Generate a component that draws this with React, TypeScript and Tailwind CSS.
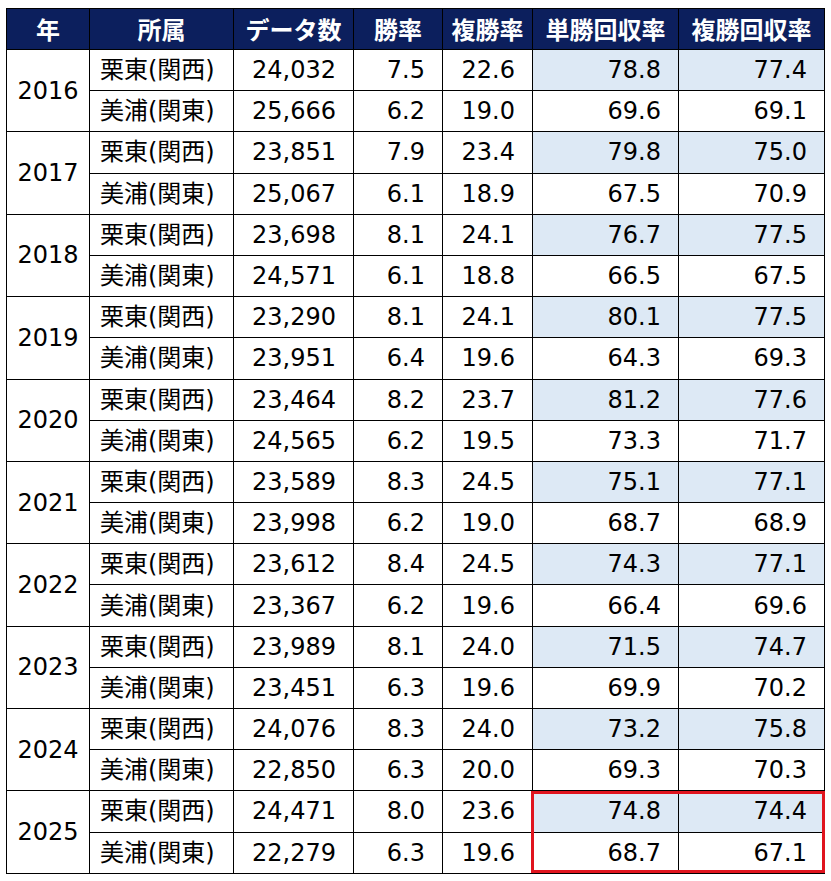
import { Fragment } from 'react';

const rows = [
  { year: '2016', k: ['24,032', '7.5', '22.6', '78.8', '77.4'], m: ['25,666', '6.2', '19.0', '69.6', '69.1'] },
  { year: '2017', k: ['23,851', '7.9', '23.4', '79.8', '75.0'], m: ['25,067', '6.1', '18.9', '67.5', '70.9'] },
  { year: '2018', k: ['23,698', '8.1', '24.1', '76.7', '77.5'], m: ['24,571', '6.1', '18.8', '66.5', '67.5'] },
  { year: '2019', k: ['23,290', '8.1', '24.1', '80.1', '77.5'], m: ['23,951', '6.4', '19.6', '64.3', '69.3'] },
  { year: '2020', k: ['23,464', '8.2', '23.7', '81.2', '77.6'], m: ['24,565', '6.2', '19.5', '73.3', '71.7'] },
  { year: '2021', k: ['23,589', '8.3', '24.5', '75.1', '77.1'], m: ['23,998', '6.2', '19.0', '68.7', '68.9'] },
  { year: '2022', k: ['23,612', '8.4', '24.5', '74.3', '77.1'], m: ['23,367', '6.2', '19.6', '66.4', '69.6'] },
  { year: '2023', k: ['23,989', '8.1', '24.0', '71.5', '74.7'], m: ['23,451', '6.3', '19.6', '69.9', '70.2'] },
  { year: '2024', k: ['24,076', '8.3', '24.0', '73.2', '75.8'], m: ['22,850', '6.3', '20.0', '69.3', '70.3'] },
  { year: '2025', k: ['24,471', '8.0', '23.6', '74.8', '74.4'], m: ['22,279', '6.3', '19.6', '68.7', '67.1'] },
];

const headers = ['年', '所属', 'データ数', '勝率', '複勝率', '単勝回収率', '複勝回収率'];
const widths = ['w-[83px]', 'w-[144px]', 'w-[120px]', 'w-[89px]', 'w-[90px]', 'w-[146px]', 'w-[146px]'];

const App = () => {
  return (
    <div className="w-[831px] h-[881px] bg-white pt-[8px] pl-[6px]" style={{ fontFamily: '"DejaVu Sans", "Noto Sans CJK JP", sans-serif' }}>
      <div className="relative w-[818px]">
        <table className="table-fixed border-collapse w-[818px] text-[24px] text-black leading-none">
          <colgroup>
            {widths.map((w, i) => (
              <col key={i} className={w} />
            ))}
          </colgroup>
          <thead>
            <tr className="h-[41px] bg-[#0c1f5d]">
              {headers.map((h) => (
                <th
                  key={h}
                  className="border border-black text-white font-bold text-[24px] text-center p-0"
                  style={{ fontFamily: '"Noto Sans CJK JP", sans-serif' }}
                >
                  {h}
                </th>
              ))}
            </tr>
          </thead>
          <tbody>
            {rows.map((r) => (
              <Fragment key={r.year}>
                <tr className="h-[41.2px]">
                  <td rowSpan={2} className="border border-black text-center p-0">
                    {r.year}
                  </td>
                  <td className="border-x border-t border-black border-b border-b-dotted pl-[10px] p-0">栗東(関西)</td>
                  {r.k.map((v, i) => (
                    <td
                      key={i}
                      className={`border-x border-t border-black border-b border-b-dotted text-right pr-[17px] ${i >= 3 ? 'bg-[#dde9f5]' : ''}`}
                    >
                      {v}
                    </td>
                  ))}
                </tr>
                <tr className="h-[41.2px]">
                  <td className="border-x border-b border-black pl-[10px] p-0">美浦(関東)</td>
                  {r.m.map((v, i) => (
                    <td key={i} className="border-x border-b border-black text-right pr-[17px]">
                      {v}
                    </td>
                  ))}
                </tr>
              </Fragment>
            ))}
          </tbody>
        </table>
        <div className="absolute left-[525px] top-[783px] w-[294px] h-[82px] border-[3px] border-[#e0141e] pointer-events-none" />
      </div>
    </div>
  );
};

export default App;
